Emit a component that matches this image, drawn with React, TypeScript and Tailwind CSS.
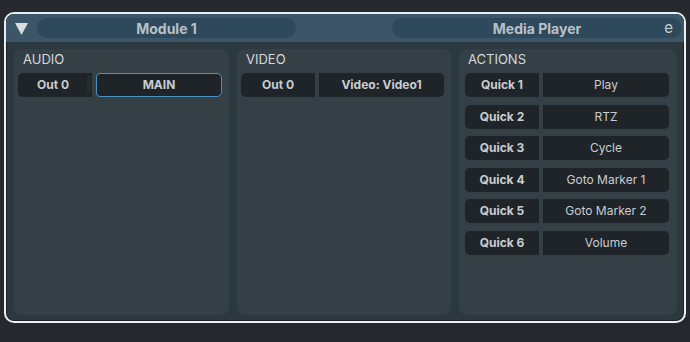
import { ReactNode } from 'react'

const actions = [
  ['Quick 1', 'Play'],
  ['Quick 2', 'RTZ'],
  ['Quick 3', 'Cycle'],
  ['Quick 4', 'Goto Marker 1'],
  ['Quick 5', 'Goto Marker 2'],
  ['Quick 6', 'Volume'],
]

function Column({ title, children }: { title: string; children?: ReactNode }) {
  return (
    <div className="h-full rounded-[8px] bg-[#343f46] pl-1 pr-[7px]">
      <div className="h-6 pl-[5px] pt-[2px] text-[13px] leading-[16px] text-[#d4d8dc]">{title}</div>
      <div className="flex flex-col gap-[8px]">{children}</div>
    </div>
  )
}

function Row({ k, v, selected, meter, boldValue }: { k: string; v: string; selected?: boolean; meter?: boolean; boldValue?: boolean }) {
  return (
    <div className="flex h-6 gap-1">
      <div className="relative flex w-[74px] items-center justify-center rounded-l-[5px] bg-[#1f2428] text-[12px] font-bold text-[#c9cdd1]">
        <span className={meter ? 'pr-1' : ''}>{k}</span>
        {meter && <div className="absolute right-[1px] top-[3px] h-[18px] w-[4px] bg-[#242d2b]" />}
      </div>
      <div
        className={`flex flex-1 items-center justify-center rounded-r-[5px] bg-[#1f2428] text-[12px] text-[#c9cdd1] ${
          selected ? 'rounded-[4px] border border-[#4b92c3] font-bold' : ''
        } ${boldValue ? 'font-bold' : ''}`}
      >
        {v}
      </div>
    </div>
  )
}

export default function App() {
  return (
    <div className="h-[342px] w-[690px] bg-[#25282c] pl-1 pt-3 font-['Inter',sans-serif]">
      <div className="h-[311px] w-[682px] overflow-hidden rounded-[10px] border-2 border-[#eceff1] bg-[#2c383f] shadow-[inset_0_0_0_1px_#1c2226]">
        {/* Header */}
        <div className="flex h-7 items-center bg-[#3c5667] pl-[9px] pr-[2px]">
          <svg width="13" height="12" viewBox="0 0 13 12" className="mr-[9px] mt-[1px]">
            <path d="M0 0 H13 L6.5 12 Z" fill="#d8dde0" />
          </svg>
          <div className="flex h-5 w-[259px] items-center justify-center rounded-full bg-[#2e495b] text-[14px] font-bold text-[#b9c1c7]">
            Module 1
          </div>
          <div className="flex-1" />
          <div className="relative flex h-5 w-[290px] items-center justify-center rounded-full bg-[#2e495b] text-[14px] font-bold text-[#b9c1c7]">
            Media Player
            <span className="absolute right-[9px] top-[-1px] text-[15px] font-normal text-[#c9cfd3]">e</span>
          </div>
        </div>

        {/* Body */}
        <div className="grid h-[279px] grid-cols-[215px_214px_218px] gap-2 px-2 pb-[6px] pt-[7px]">
          <Column title="AUDIO">
            <Row k="Out 0" v="MAIN" selected meter />
          </Column>
          <Column title="VIDEO">
            <Row k="Out 0" v="Video: Video1" boldValue />
          </Column>
          <div className="h-full rounded-[8px] bg-[#343f46] pl-[6px] pr-[8px]">
            <div className="h-6 pl-[3px] pt-[2px] text-[13px] leading-[16px] text-[#d4d8dc]">ACTIONS</div>
            <div className="flex flex-col gap-[7.6px]">
              {actions.map(([k, v]) => (
                <Row key={k} k={k} v={v} />
              ))}
            </div>
          </div>
        </div>
      </div>
    </div>
  )
}
